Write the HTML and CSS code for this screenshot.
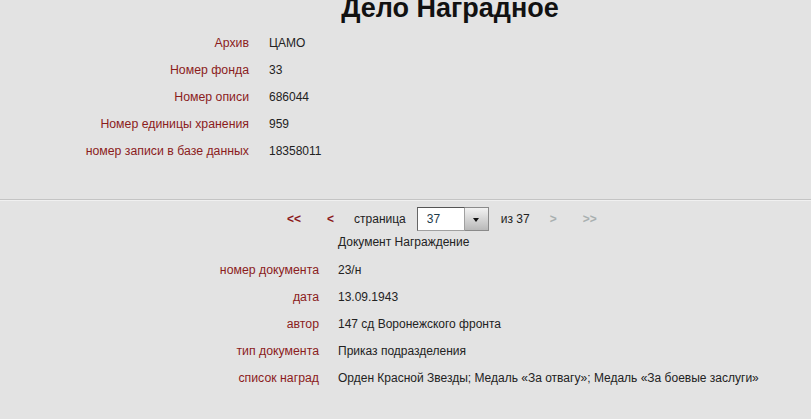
FILE: index.html
```html
<!DOCTYPE html>
<html lang="ru">
<head>
  <meta charset="UTF-8" />
  <title>Дело Наградное</title>
  <link rel="stylesheet" href="styles.css">
</head>
<body>

  <h1 class="titulo">Дело Наградное</h1>

  <div class="info info-delo">
    <div class="rotulo">Архив</div><div class="valor">ЦАМО</div>
    <div class="rotulo">Номер фонда</div><div class="valor">33</div>
    <div class="rotulo">Номер описи</div><div class="valor">686044</div>
    <div class="rotulo">Номер единицы хранения</div><div class="valor">959</div>
    <div class="rotulo">номер записи в базе данных</div><div class="valor">18358011</div>
  </div>

  <div class="divisor"></div>

  <div class="paginacao">
    <a class="seta ativa primeira">&lt;&lt;</a>
    <a class="seta ativa anterior">&lt;</a>
    <span class="pagina-label">страница</span>
    <div class="seletor">
      <input type="text" value="37" />
      <span class="botao"><span class="triangulo"></span></span>
    </div>
    <span class="total">из 37</span>
    <a class="seta inativa proxima">&gt;</a>
    <a class="seta inativa ultima">&gt;&gt;</a>
  </div>

  <div class="doc-titulo">Документ Награждение</div>

  <div class="info info-doc">
    <div class="rotulo">номер документа</div><div class="valor">23/н</div>
    <div class="rotulo">дата</div><div class="valor">13.09.1943</div>
    <div class="rotulo">автор</div><div class="valor">147 сд Воронежского фронта</div>
    <div class="rotulo">тип документа</div><div class="valor">Приказ подразделения</div>
    <div class="rotulo">список наград</div><div class="valor">Орден Красной Звезды; Медаль «За отвагу»; Медаль «За боевые заслуги»</div>
  </div>

</body>
</html>
```

FILE: styles.css
```css
* {
  box-sizing: border-box;
}

body {
  font-family: "Liberation Sans", Arial, sans-serif;
  font-size: 12px;
  background-color: #e3e3e3;
  color: #222;
  margin: 0;
  padding: 0;
  overflow: hidden;
}

.titulo {
  margin: -7px 0 0 0;
  padding-left: 89px;
  font-size: 27px;
  line-height: 30px;
  font-weight: bold;
  text-align: center;
  color: #111;
}

.info {
  display: grid;
  column-gap: 20px;
  grid-auto-rows: 27px;
  align-items: center;
}

.info-delo {
  grid-template-columns: 249px auto;
  margin-top: 6px;
}

.info-doc {
  grid-template-columns: 319px auto;
  column-gap: 19px;
  margin-top: 3px;
}

.rotulo {
  text-align: right;
  font-size: 12.3px;
  color: #8b1c1c;
}

.valor {
  color: #222;
  white-space: nowrap;
}

.divisor {
  margin-top: 35px;
  border-top: 1px solid #c4c4c4;
  border-bottom: 1px solid #f0f0f0;
}

.paginacao {
  display: flex;
  align-items: center;
  height: 24px;
  margin-top: 6px;
  padding-left: 287px;
}

.seta {
  font-weight: bold;
  cursor: pointer;
}

.seta.ativa {
  color: #8b1c1c;
}

.seta.inativa {
  color: #a9b0b0;
}

.primeira {
  margin-right: 26px;
}

.anterior {
  margin-right: 20px;
}

.pagina-label {
  margin-right: 11px;
}

.seletor {
  display: flex;
  height: 24px;
  margin-right: 12px;
}

.seletor input {
  width: 48px;
  height: 24px;
  border: 1px solid #a0a0a0;
  border-top-color: #555;
  border-left-color: #666;
  background-color: #fff;
  color: #1d3b4a;
  font-family: inherit;
  font-size: 12px;
  padding: 0 0 0 9px;
  margin: 0;
}

.botao {
  width: 24px;
  height: 24px;
  border: 1px solid #8a8a8a;
  border-left: none;
  background: linear-gradient(#f2f2f2, #b9b9b9);
  display: flex;
  align-items: center;
  justify-content: center;
}

.triangulo {
  width: 0;
  height: 0;
  border-left: 3px solid transparent;
  border-right: 3px solid transparent;
  border-top: 4px solid #111;
  margin-top: 2px;
}

.total {
  margin-right: 20px;
}

.proxima {
  margin-right: 26px;
}

.doc-titulo {
  padding-left: 338px;
  line-height: 22px;
  height: 22px;
  margin-top: 0;
}
```
